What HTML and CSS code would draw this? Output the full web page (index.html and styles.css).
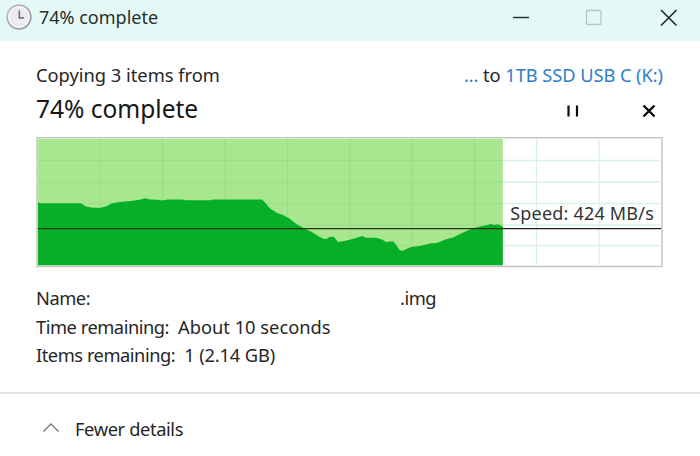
FILE: index.html
```
<!DOCTYPE html>
<html lang="en">
<head>
<meta charset="utf-8">
<title>74% complete</title>
<link rel="stylesheet" href="styles.css">
</head>
<body>
<main class="dialog">
  <header class="titlebar">
    <svg class="clock" width="28" height="28" viewBox="0 0 28 28">
      <defs><linearGradient id="rim" x1="0" y1="0" x2="1" y2="1"><stop offset="0" stop-color="#c2c0c3"/><stop offset="1" stop-color="#969499"/></linearGradient></defs>
      <circle cx="14" cy="14" r="11.8" fill="#ececef" stroke="url(#rim)" stroke-width="1.8"/>
      <circle cx="14" cy="14" r="10" fill="none" stroke="#fbfafc" stroke-width="1.2"/>
      <path d="M14 5v1.5M14 21.5V23M5 14h1.5M21.500 14H23M9.500 6.200l.7 1.200M18.500 6.200l-.7 1.200M9.500 21.800l.7-1.200M18.500 21.800l-.7-1.200M6.200 18.500l1.200-.7M21.800 18.500l-1.200-.7M6.200 9.500l1.200.7M21.800 9.500l-1.200.7" stroke="#d2d0d5" stroke-width=".8"/>
      <path d="M14.300 7.500v7.300H19" fill="none" stroke="#77747b" stroke-width="1.7"/>
    </svg>
    <h1 class="title">74% complete</h1>
    <svg class="controls" width="180" height="36" viewBox="0 0 180 36" fill="none">
      <path d="M13 17.500h16" stroke="#202a29" stroke-width="1.400"/>
      <rect x="86.500" y="10.500" width="14.500" height="14" rx="1" stroke="#b9c6c4" stroke-width="1.300"/>
      <path d="M161 10l15.500 15.500M176.500 10L161 25.500" stroke="#202a29" stroke-width="1.600"/>
    </svg>
  </header>
  <section class="body">
    <div class="route">
      <span>Copying 3 items from</span>
      <span class="target"><a class="link">...</a> to <a class="link">1TB SSD USB C (K:)</a></span>
    </div>
    <div class="status">
      <h2 class="heading">74% complete</h2>
      <svg class="actions" width="96" height="24" viewBox="0 0 96 24" fill="none" stroke="#0b0b0b">
        <path d="M1.500 6.500v11M10 6.500v11" stroke-width="2.200"/>
        <path d="M76.500 6.500l11 11M87.500 6.500l-11 11" stroke-width="2.400"/>
      </svg>
    </div>
    <div class="chart">
      <svg class="plot" width="627" height="131" viewBox="36 137 627 131">
        <rect x="37" y="137.700" width="625" height="128.800" fill="#fff" stroke="#c5c3c6" stroke-width="1.500"/>
        <path d="M536.500 139v126M599 139v126M503 160.500h157M503 182h157M503 203.500h157M503 225h157M503 245.500h157" stroke="#d8f3e3" stroke-width="1.300"/>
        <rect x="38" y="139" width="464.800" height="126.200" fill="#a8e690"/>
        <path d="M100.300 139v126M162.500 139v126M225 139v126M287.500 139v126M350 139v126M412 139v126M474.500 139v126M38 160.500h464.800M38 182h464.800M38 203.500h464.800M38 225h464.800M38 245.500h464.800" stroke="#9cdd86" stroke-width="1.200"/>
        <path d="M38 265.200V202L40 203.300 81 203.300 86 206.500 93 207.800 101 207.800 107 206 112 203.300 120 202 131 201 141 199.500 145 198.300 150 199.500 158 199.700 162 200.600 168 199.500 182 199.500 186 200.300 210 200.300 214 199.500 262 199.500 266 203.500 270 208.500 277 213 283 215 289 218.300 297 224.500 304 228.300 311 231.500 318 236 324 239 327 238.800 330 236.800 334 237 338 242 348 240.200 360 236.800 362 236 366 237.700 376 237.700 382 239.500 386 242 393 241.200 396 244.500 399 249.500 402 251 411 247 420 246 430 243.500 437 243 446 239.200 453 237.600 461 233.500 470 229.600 478 227 487 225 491 224 494 225 498 224.200 502.800 226.500V265.200z" fill="#07af27"/>
        <path d="M38 228.600h464.800" stroke="#243411" stroke-width="1.400"/>
        <path d="M502.800 228.600H661" stroke="#222" stroke-width="1.300"/>
      </svg>
      <span class="speed">Speed: 424 MB/s</span>
    </div>
    <div class="details">
      <div class="row"><span class="label">Name:</span><span class="file">.img</span></div>
      <div class="row"><span class="label">Time remaining:</span><span>About 10 seconds</span></div>
      <div class="row"><span class="label">Items remaining:</span><span class="size">1 (2.14 GB)</span></div>
    </div>
  </section>
  <footer class="footer">
    <svg width="18" height="12" viewBox="0 0 18 12" fill="none"><path d="M1.500 9.500L9 2l7.500 7.500" stroke="#777" stroke-width="1.400"/></svg>
    <span class="toggle">Fewer details</span>
  </footer>
</main>
</body>
</html>
```
FILE: styles.css
```
* { box-sizing: border-box; }
body { margin: 0; background: #fff; color: #262626; font: 18.300px/28.700px "Noto Sans", "Open Sans", sans-serif; }
h1, h2 { margin: 0; font-weight: 400; }
span { white-space: nowrap; }
.dialog { width: 700px; height: 456px; overflow: hidden; display: flex; flex-direction: column; }
.titlebar { height: 41px; padding: 0 16px 0 5px; background: #e4f8f6; display: flex; align-items: flex-start; color: #25302f; }
.clock { margin-top: 3px; }
.title { font-size: 18px; line-height: 34px; margin-left: 6px; flex: 1; }
.controls { margin-right: 4px; }
.body { padding: 20px 37px 0 36px; height: 351px; }
.route { display: flex; justify-content: space-between; height: 29px; }
.target { letter-spacing: -.07px; }
.link { color: #2f7dcc; }
.status { display: flex; justify-content: space-between; align-items: center; height: 38px; }
.heading { font-size: 24.500px; line-height: 36px; color: #161616; }
.actions { margin-top: 4px; }
.chart { display: grid; margin-top: 9px; height: 131px; }
.plot, .speed { grid-area: 1 / 1; }
.speed { justify-self: end; padding-right: 9px; margin-top: 62px; font-size: 18px; letter-spacing: .2px; color: #333; }
.details { margin-top: 16px; line-height: 28.500px; }
.row { display: flex; gap: 9px; }
.label { letter-spacing: -.47px; }
.size { letter-spacing: -.15px; }
.file { margin-left: auto; margin-right: 227px; letter-spacing: -.5px; }
.footer { border-top: 2px solid #e2e2e2; flex: 1; padding: 21px 0 0 42px; display: flex; align-items: flex-start; gap: 15px; }
.footer svg { margin-top: 7px; }
.toggle { letter-spacing: -.38px; }
```
